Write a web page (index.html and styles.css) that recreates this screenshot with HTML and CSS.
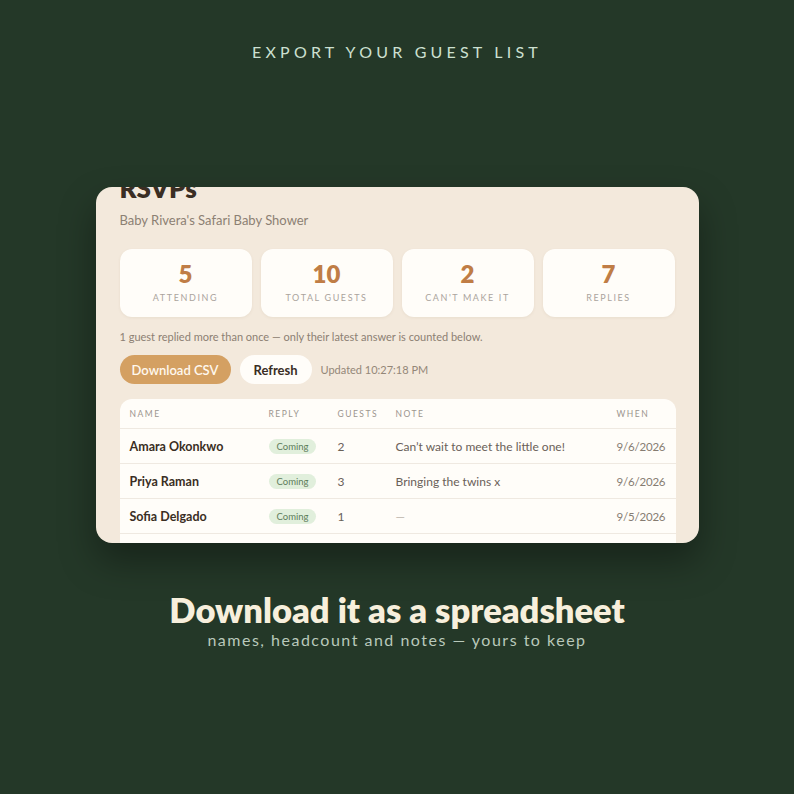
FILE: index.html
```html
<!DOCTYPE html>
<html>
<head>
  <link rel="stylesheet" href="styles.css">
</head>
<body>

  <p class="eyebrow">Export your guest list</p>

  <div class="shot">
    <div class="shot-inner">
      <h1 class="title">RSVPs</h1>
      <p class="subtitle">Baby Rivera's Safari Baby Shower</p>

      <div class="stats">
        <div class="stat"><span class="stat-num">5</span><span class="stat-label">Attending</span></div>
        <div class="stat"><span class="stat-num">10</span><span class="stat-label">Total guests</span></div>
        <div class="stat"><span class="stat-num">2</span><span class="stat-label">Can't make it</span></div>
        <div class="stat"><span class="stat-num">7</span><span class="stat-label">Replies</span></div>
      </div>

      <p class="dupe-note">1 guest replied more than once — only their latest answer is counted below.</p>

      <div class="actions">
        <button class="btn btn-primary">Download CSV</button>
        <button class="btn btn-light">Refresh</button>
        <span class="updated">Updated 10:27:18 PM</span>
      </div>

      <table class="rsvp-table">
        <thead>
          <tr>
            <th class="col-name">Name</th>
            <th class="col-reply">Reply</th>
            <th class="col-guests">Guests</th>
            <th class="col-note">Note</th>
            <th class="col-when">When</th>
          </tr>
        </thead>
        <tbody>
          <tr>
            <td class="name">Amara Okonkwo</td>
            <td><span class="badge">Coming</span></td>
            <td>2</td>
            <td>Can’t wait to meet the little one!</td>
            <td class="when">9/6/2026</td>
          </tr>
          <tr>
            <td class="name">Priya Raman</td>
            <td><span class="badge">Coming</span></td>
            <td>3</td>
            <td>Bringing the twins x</td>
            <td class="when">9/6/2026</td>
          </tr>
          <tr>
            <td class="name">Sofia Delgado</td>
            <td><span class="badge">Coming</span></td>
            <td>1</td>
            <td class="empty">—</td>
            <td class="when">9/5/2026</td>
          </tr>
          <!-- next row is scrolled past the bottom of the frame -->
          <tr>
            <td></td>
            <td></td>
            <td></td>
            <td></td>
            <td></td>
          </tr>
        </tbody>
      </table>
    </div>
  </div>

  <h2 class="headline">Download it as a spreadsheet</h2>
  <p class="tagline">names, headcount and notes — yours to keep</p>

</body>
</html>
```

FILE: styles.css
```css
/* page frame */
html, body {
  margin: 0;
  padding: 0;
}

body {
  width: 794px;
  height: 794px;
  overflow: hidden;
  background: #243828;
  font-family: Lato, "Noto Sans", sans-serif;
  color: #3b3128;
}

.eyebrow {
  margin: 42px 0 0;
  text-align: center;
  font-size: 16px;
  line-height: 20px;
  letter-spacing: 4.2px;
  text-transform: uppercase;
  color: #cde0d1;
}

/* the app screenshot */
.shot {
  width: 603px;
  height: 356px;
  margin: 125px auto 0;
  background: #f3e9dc;
  border-radius: 16px;
  overflow: hidden;
  box-shadow: 0 18px 36px rgba(0, 0, 0, 0.35);
}

.shot-inner {
  margin-top: -15px;
  padding: 0 24px;
}

.title {
  margin: 0;
  font-size: 26px;
  line-height: 32px;
  font-weight: 800;
  color: #3a2e24;
}

.subtitle {
  margin: 7px 0 0;
  font-size: 13px;
  line-height: 18px;
  color: #8c8073;
}

.stats {
  display: grid;
  grid-template-columns: repeat(4, 1fr);
  gap: 9px;
  margin-top: 20px;
}

.stat {
  display: flex;
  flex-direction: column;
  align-items: center;
  height: 68px;
  box-sizing: border-box;
  padding-top: 11px;
  background: #fffdf9;
  border-radius: 12px;
  box-shadow: 0 1px 3px rgba(120, 90, 50, 0.08);
}

.stat-num {
  font-size: 24px;
  line-height: 28px;
  font-weight: 800;
  color: #c07d46;
}

.stat-label {
  margin-top: 4px;
  font-size: 9px;
  line-height: 12px;
  letter-spacing: 1.6px;
  text-transform: uppercase;
  color: #aba49d;
}

.dupe-note {
  margin: 12px 0 0;
  font-size: 11px;
  line-height: 16px;
  color: #8c8073;
}

.actions {
  display: flex;
  align-items: center;
  gap: 9px;
  margin-top: 10px;
}

.btn {
  height: 29px;
  border: none;
  border-radius: 15px;
  font-family: inherit;
  font-size: 13px;
}

.btn-primary {
  width: 111px;
  background: #d4a062;
  color: #fff8ee;
  font-weight: 600;
}

.btn-light {
  width: 72px;
  background: #fffdf9;
  color: #3a2e24;
  font-weight: 700;
}

.updated {
  font-size: 11px;
  color: #938778;
}

/* guest table */
.rsvp-table {
  width: 100%;
  table-layout: fixed;
  margin-top: 15px;
  border-collapse: collapse;
  background: #fffdf9;
  border-radius: 12px 12px 0 0;
  overflow: hidden;
  font-size: 12px;
  color: #6a6058;
}

.rsvp-table th {
  height: 29px;
  padding: 0 10px;
  text-align: left;
  font-size: 8.5px;
  font-weight: 400;
  letter-spacing: 1.5px;
  text-transform: uppercase;
  color: #9c958e;
  border-bottom: 1px solid #efe9e1;
}

.rsvp-table td {
  height: 34px;
  padding: 0 10px;
  border-bottom: 1px solid #efe9e1;
  white-space: nowrap;
}

.col-name { width: 119px; }
.col-reply { width: 49px; }
.col-guests { width: 38px; }
.col-note { width: 201px; }
.col-when { width: 49px; }

.rsvp-table td.name {
  font-weight: 700;
  font-size: 12.5px;
  color: #3a2e24;
}

.rsvp-table td.when {
  font-size: 11.5px;
  letter-spacing: -0.2px;
  color: #867c72;
}

.rsvp-table td.empty {
  color: #bdb5ad;
}

.badge {
  display: inline-block;
  padding: 1px 8px;
  border-radius: 8px;
  background: #e1efdc;
  color: #5e7d5a;
  font-size: 9.5px;
  line-height: 13px;
}

/* closing copy */
.headline {
  margin: 47px 0 0;
  text-align: center;
  font-size: 34.5px;
  line-height: 40px;
  font-weight: 800;
  color: #f7efdc;
}

.tagline {
  margin: 0;
  text-align: center;
  font-size: 16px;
  line-height: 20px;
  letter-spacing: 1.5px;
  color: #b9c9bb;
}
```
